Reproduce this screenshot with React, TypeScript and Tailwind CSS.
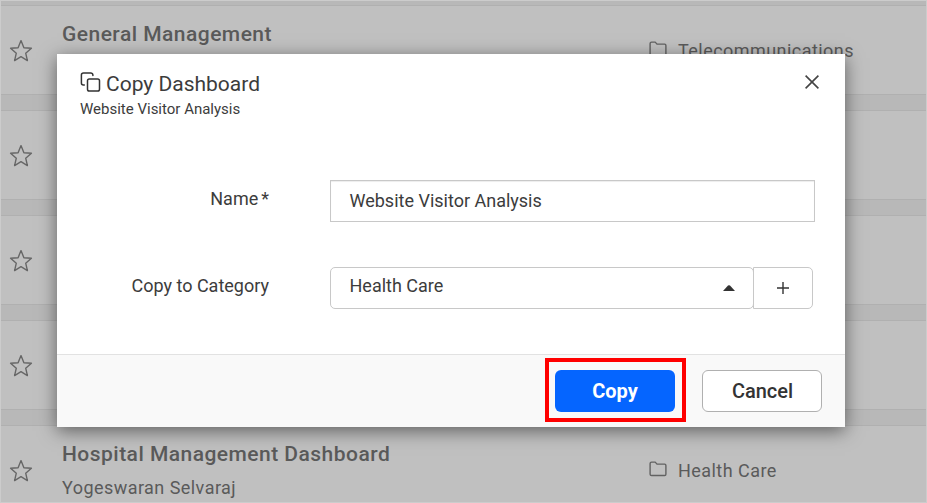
import React from "react";

type Item = { title?: string; owner?: string; category?: string };

const items: Item[] = [
  { title: "General Management", category: "Telecommunications" },
  {},
  {},
  {},
  { title: "Hospital Management Dashboard", owner: "Yogeswaran Selvaraj", category: "Health Care" },
];

function StarIcon() {
  return (
    <svg className="mt-[33px] ml-2 h-6 w-6 shrink-0" viewBox="0 0 24 24" fill="none" stroke="#666" strokeWidth="1.4" strokeLinejoin="round">
      <path d="M12 1.6 L14.9 8.7 L22.4 9.3 L16.7 14.2 L18.4 21.6 L12 17.7 L5.6 21.6 L7.3 14.2 L1.6 9.3 L9.1 8.7 Z" />
    </svg>
  );
}

function FolderIcon() {
  return (
    <svg className="h-4 w-[18px]" viewBox="0 0 18 16" fill="none" stroke="#626262" strokeWidth="1.4" strokeLinejoin="round">
      <path d="M2.6 1.1 H6.2 L8 3.1 H15.6 Q16.9 3.1 16.9 4.4 V13.2 Q16.9 14.5 15.6 14.5 H2.6 Q1.1 14.5 1.1 13.2 V2.4 Q1.1 1.1 2.6 1.1 Z" />
    </svg>
  );
}

function Row({ title, owner, category }: Item) {
  return (
    <div className="flex h-[90px] shrink-0 border-y border-[#b0b0b0] bg-[#c0c0c0]">
      <StarIcon />
      <div className="ml-[29px] w-[587px] pt-[16px]">
        <div className="h-6 text-[21px] leading-6 font-medium tracking-[0.47px]">{title}</div>
        <div className="mt-[11px] text-[18px] leading-[22px] tracking-[0.45px]">{owner}</div>
      </div>
      {category && (
        <div className="mt-[33px] flex h-6 gap-[11px] text-[18px] leading-6 tracking-[0.45px]">
          <span className="pt-[2px]"><FolderIcon /></span>
          <span>{category}</span>
        </div>
      )}
    </div>
  );
}

function CopyDialog() {
  return (
    <section className="absolute top-[54px] left-[57px] flex h-[373px] w-[788px] flex-col bg-white text-[#3c3c3c] shadow-[0_4px_17px_rgba(0,0,0,0.5)]">
      <header className="flex h-[126px] justify-between pt-[17px] pr-[25.5px] pl-[23px]">
        <div>
          <h1 className="flex h-[26px] text-[21px] leading-[26px]">
            <svg className="mr-[5px] h-[22px] w-[21px]" viewBox="0 0 21 22" fill="none" stroke="#333" strokeWidth="1.5" strokeLinecap="round">
              <path d="M4.3 14 H3.4 Q1.4 14 1.4 12 V4 Q1.4 1.9 3.5 1.9 H10.7 Q12.7 1.9 12.9 4 V4.5" />
              <rect x="7.5" y="8" width="12" height="12" rx="1.8" />
            </svg>
            Copy Dashboard
          </h1>
          <p className="mt-[3px] text-[15px] leading-[18px]">Website Visitor Analysis</p>
        </div>
        <svg className="mt-[3px] h-4 w-4" viewBox="0 0 16 16" fill="none" stroke="#444" strokeWidth="1.6">
          <path d="M1.6 1.6 L14.4 14.4 M14.4 1.6 L1.6 14.4" />
        </svg>
      </header>
      <div className="flex h-[42px]">
        <label className="w-[212px] pt-[7px] text-right text-[18px] leading-6">Name<span className="ml-[3px]">*</span></label>
        <div className="ml-[61px] w-[485px] border border-[#c8c8c8] pt-[8px] pl-[18.5px] text-[18px] leading-6 shadow-[inset_0_1px_1px_rgba(0,0,0,0.075)]">Website Visitor Analysis</div>
      </div>
      <div className="mt-[45px] flex h-[42px]">
        <label className="w-[212px] pt-[7px] text-right text-[18px] leading-6">Copy to Category</label>
        <div className="ml-[61px] flex w-[424px] justify-between rounded-[5px] border border-[#c8c8c8] pt-[6px] pr-[18px] pl-[18.5px] text-[18px] leading-6">
          <span>Health Care</span>
          <svg className="mt-[11px] h-[6px] w-3" viewBox="0 0 12 6" fill="#333"><path d="M0 6 L5 .5 Q6 -.2 7 .5 L12 6 Z" /></svg>
        </div>
        <button className="-ml-px flex w-[60px] items-center justify-center rounded-r-[5px] border border-[#c8c8c8]">
          <svg className="h-3 w-3" viewBox="0 0 12 12" stroke="#333" strokeWidth="1.4"><path d="M0 6 H12 M6 0 V12" /></svg>
        </button>
      </div>
      <footer className="mt-auto flex h-[73px] border-t border-[#e2e2e2] bg-[#f9f9f9] pl-[488px] text-[20px] font-medium">
        <div className="mt-[3px] flex h-[64px] w-[141px] border-4 border-[#f00] pt-2 pl-[6px]">
          <button className="h-[42px] w-[120px] rounded-[6px] bg-[#0565ff] font-bold text-white">Copy</button>
        </div>
        <button className="mt-[15px] ml-4 h-[42px] w-[120px] rounded-[6px] border border-[#b0b0b0] bg-white pl-px text-[#333]">Cancel</button>
      </footer>
    </section>
  );
}

export default function App() {
  return (
    <main className="relative h-[503px] w-[927px] overflow-hidden border border-[#cccccc] bg-[#b8b8b8] font-['Roboto','Liberation_Sans',sans-serif] text-[#5a5a5a]">
      <div className="flex h-full flex-col gap-[15px] pt-1">
        {items.map((item, i) => <Row key={i} {...item} />)}
      </div>
      <div className="absolute -top-px -left-px"><CopyDialog /></div>
    </main>
  );
}
